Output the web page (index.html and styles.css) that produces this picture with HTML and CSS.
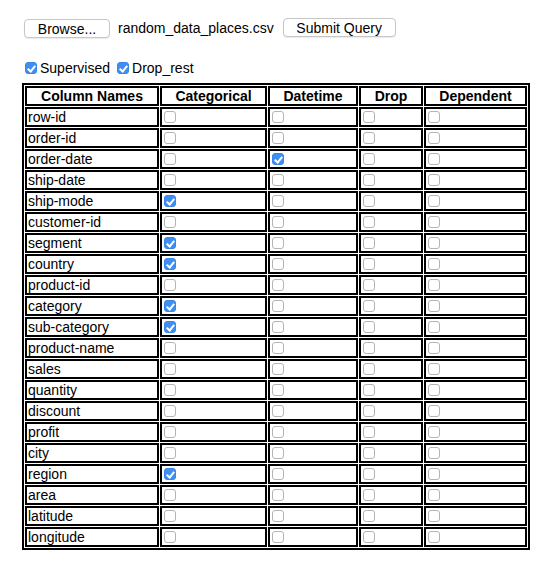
FILE: index.html
```html
<!DOCTYPE html>
<html>
<head>
<meta charset="utf-8">
<link rel="stylesheet" href="styles.css">
</head>
<body>
<div class="page">
  <form class="upload">
    <button type="button" class="btn btn-browse">Browse...</button>
    <span class="filename">random_data_places.csv</span>
    <button type="button" class="btn btn-submit">Submit Query</button>
  </form>
  <div class="options">
    <label class="opt"><input type="checkbox" class="cb" checked> Supervised</label>
    <label class="opt"><input type="checkbox" class="cb" checked> Drop_rest</label>
  </div>
  <table class="cols">
    <thead>
      <tr><th class="c1">Column Names</th><th class="c2">Categorical</th><th class="c3">Datetime</th><th class="c4">Drop</th><th class="c5">Dependent</th></tr>
    </thead>
    <tbody>
      <tr><td>row-id</td><td><input type="checkbox" class="cb"></td><td><input type="checkbox" class="cb"></td><td><input type="checkbox" class="cb"></td><td><input type="checkbox" class="cb"></td></tr>
      <tr><td>order-id</td><td><input type="checkbox" class="cb"></td><td><input type="checkbox" class="cb"></td><td><input type="checkbox" class="cb"></td><td><input type="checkbox" class="cb"></td></tr>
      <tr><td>order-date</td><td><input type="checkbox" class="cb"></td><td><input type="checkbox" class="cb" checked></td><td><input type="checkbox" class="cb"></td><td><input type="checkbox" class="cb"></td></tr>
      <tr><td>ship-date</td><td><input type="checkbox" class="cb"></td><td><input type="checkbox" class="cb"></td><td><input type="checkbox" class="cb"></td><td><input type="checkbox" class="cb"></td></tr>
      <tr><td>ship-mode</td><td><input type="checkbox" class="cb" checked></td><td><input type="checkbox" class="cb"></td><td><input type="checkbox" class="cb"></td><td><input type="checkbox" class="cb"></td></tr>
      <tr><td>customer-id</td><td><input type="checkbox" class="cb"></td><td><input type="checkbox" class="cb"></td><td><input type="checkbox" class="cb"></td><td><input type="checkbox" class="cb"></td></tr>
      <tr><td>segment</td><td><input type="checkbox" class="cb" checked></td><td><input type="checkbox" class="cb"></td><td><input type="checkbox" class="cb"></td><td><input type="checkbox" class="cb"></td></tr>
      <tr><td>country</td><td><input type="checkbox" class="cb" checked></td><td><input type="checkbox" class="cb"></td><td><input type="checkbox" class="cb"></td><td><input type="checkbox" class="cb"></td></tr>
      <tr><td>product-id</td><td><input type="checkbox" class="cb"></td><td><input type="checkbox" class="cb"></td><td><input type="checkbox" class="cb"></td><td><input type="checkbox" class="cb"></td></tr>
      <tr><td>category</td><td><input type="checkbox" class="cb" checked></td><td><input type="checkbox" class="cb"></td><td><input type="checkbox" class="cb"></td><td><input type="checkbox" class="cb"></td></tr>
      <tr><td>sub-category</td><td><input type="checkbox" class="cb" checked></td><td><input type="checkbox" class="cb"></td><td><input type="checkbox" class="cb"></td><td><input type="checkbox" class="cb"></td></tr>
      <tr><td>product-name</td><td><input type="checkbox" class="cb"></td><td><input type="checkbox" class="cb"></td><td><input type="checkbox" class="cb"></td><td><input type="checkbox" class="cb"></td></tr>
      <tr><td>sales</td><td><input type="checkbox" class="cb"></td><td><input type="checkbox" class="cb"></td><td><input type="checkbox" class="cb"></td><td><input type="checkbox" class="cb"></td></tr>
      <tr><td>quantity</td><td><input type="checkbox" class="cb"></td><td><input type="checkbox" class="cb"></td><td><input type="checkbox" class="cb"></td><td><input type="checkbox" class="cb"></td></tr>
      <tr><td>discount</td><td><input type="checkbox" class="cb"></td><td><input type="checkbox" class="cb"></td><td><input type="checkbox" class="cb"></td><td><input type="checkbox" class="cb"></td></tr>
      <tr><td>profit</td><td><input type="checkbox" class="cb"></td><td><input type="checkbox" class="cb"></td><td><input type="checkbox" class="cb"></td><td><input type="checkbox" class="cb"></td></tr>
      <tr><td>city</td><td><input type="checkbox" class="cb"></td><td><input type="checkbox" class="cb"></td><td><input type="checkbox" class="cb"></td><td><input type="checkbox" class="cb"></td></tr>
      <tr><td>region</td><td><input type="checkbox" class="cb" checked></td><td><input type="checkbox" class="cb"></td><td><input type="checkbox" class="cb"></td><td><input type="checkbox" class="cb"></td></tr>
      <tr><td>area</td><td><input type="checkbox" class="cb"></td><td><input type="checkbox" class="cb"></td><td><input type="checkbox" class="cb"></td><td><input type="checkbox" class="cb"></td></tr>
      <tr><td>latitude</td><td><input type="checkbox" class="cb"></td><td><input type="checkbox" class="cb"></td><td><input type="checkbox" class="cb"></td><td><input type="checkbox" class="cb"></td></tr>
      <tr><td>longitude</td><td><input type="checkbox" class="cb"></td><td><input type="checkbox" class="cb"></td><td><input type="checkbox" class="cb"></td><td><input type="checkbox" class="cb"></td></tr>
    </tbody>
  </table>
</div>
</body>
</html>
```

FILE: styles.css
```css
html, body {
  margin: 0;
  padding: 0;
  background: #fff;
}
body {
  font-family: "Liberation Sans", Arial, Helvetica, sans-serif;
  font-size: 14px;
  color: #000;
}
.page {
  padding: 18px 0 0 22px;
}
.upload {
  display: flex;
  align-items: center;
  margin: 0 0 0 2px;
  height: 20px;
}
.btn {
  height: 19px;
  box-sizing: border-box;
  border: 1px solid #c6c6c6;
  border-radius: 4px;
  background: #fff;
  box-shadow: 0 1px 1px rgba(0, 0, 0, 0.08);
  font-family: "Liberation Sans", Arial, sans-serif;
  font-size: 14px;
  line-height: 16px;
  color: #000;
  padding: 0;
  text-align: center;
}
.btn-browse {
  width: 86px;
  margin-top: 1px;
}
.btn-submit {
  width: 113px;
  margin-left: 9px;
  margin-top: -1px;
}
.filename {
  margin-left: 8px;
  line-height: 16px;
}
.options {
  display: flex;
  align-items: center;
  margin-top: 22px;
  height: 16px;
  padding-left: 3px;
}
.opt {
  display: flex;
  align-items: center;
  margin-right: 7px;
  line-height: 16px;
}
.opt .cb {
  margin: 0 3px 0 0;
}
.cb {
  appearance: none;
  -webkit-appearance: none;
  width: 12px;
  height: 12px;
  box-sizing: border-box;
  border: 1px solid #b4b4b4;
  border-radius: 3px;
  background: #fff;
  position: relative;
  display: block;
}
.cb:checked {
  background: #3f8ff3;
  border-color: #3a86e6;
}
.cb:checked::after {
  content: "";
  position: absolute;
  left: 3px;
  top: 1px;
  width: 3px;
  height: 6px;
  border: solid #fff;
  border-width: 0 2px 2px 0;
  transform: rotate(40deg);
}
.cols {
  margin-top: 7px;
  border: 2px solid #000;
  border-spacing: 1px;
  table-layout: fixed;
}
.cols th, .cols td {
  border: 2px solid #000;
  padding: 0 1px;
  height: 16px;
  line-height: 16px;
  overflow: hidden;
  white-space: nowrap;
}
.cols th {
  font-weight: bold;
  text-align: center;
}
.cols td {
  text-align: left;
}
.cols td .cb {
  margin: 2px 0 2px 1px;
}
.c1 { width: 128px; }
.c2 { width: 101px; }
.c3 { width: 84px; }
.c4 { width: 58px; }
.c5 { width: 97px; }
```
